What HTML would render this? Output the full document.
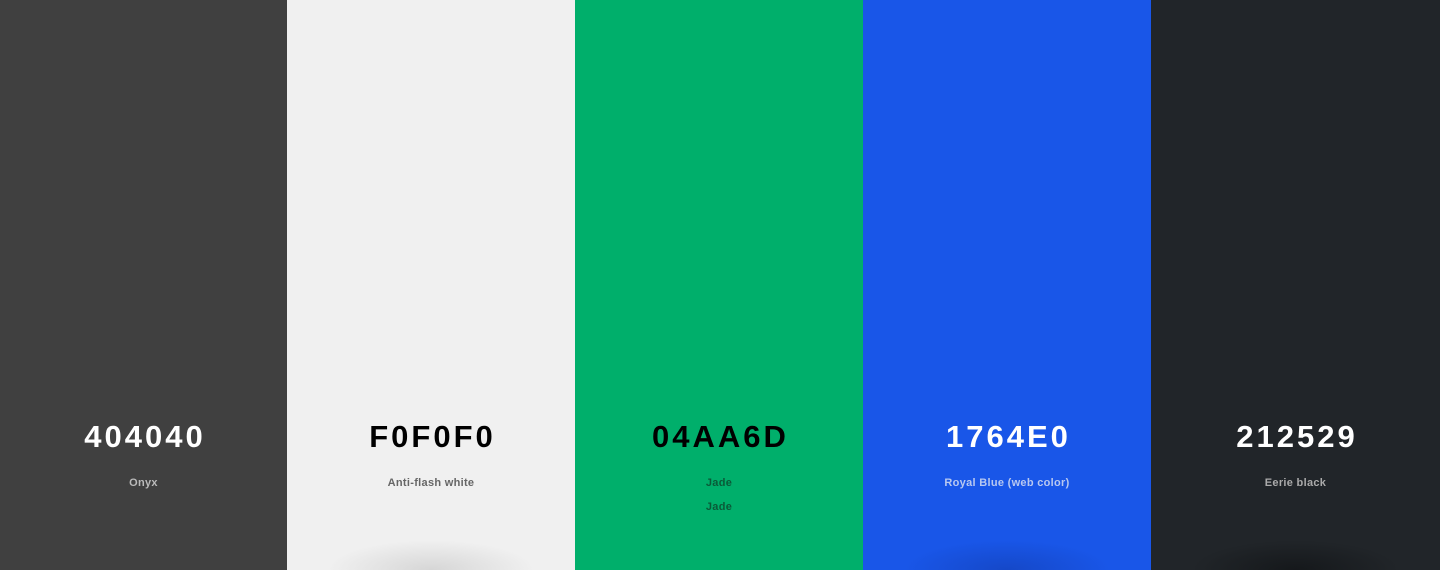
<!DOCTYPE html>
<html><head><style>
html,body{margin:0;width:1440px;height:570px;overflow:hidden}
body{display:flex;font-family:"Liberation Sans",sans-serif}
.p{width:288px;height:570px;position:relative;text-align:center;overflow:hidden}
.h{position:absolute;top:419px;left:0;right:0;font-size:31px;font-weight:bold;letter-spacing:3px;line-height:36px;padding-left:3px}
.n{position:absolute;top:476px;left:0;right:0;font-size:11px;font-weight:bold;line-height:14px;letter-spacing:0.3px}
.n2{top:500px}
.s{position:absolute;left:40px;right:40px;bottom:0;height:30px}
</style></head><body>
<div class="p" style="background:#404040;width:287px"><div class="h" style="color:#fff">404040</div><div class="n" style="color:#bbb">Onyx</div></div>
<div class="p" style="background:#f0f0f0"><div class="s" style="background:radial-gradient(ellipse at 50% 100%,#d6d6d6 0%,rgba(240,240,240,0) 70%)"></div><div class="h" style="color:#000">F0F0F0</div><div class="n" style="color:#666">Anti-flash white</div></div>
<div class="p" style="background:#00af6b"><div class="h" style="color:#000">04AA6D</div><div class="n" style="color:#0a5a38">Jade</div><div class="n n2" style="color:#0a5a38">Jade</div></div>
<div class="p" style="background:#1956e8"><div class="s" style="background:radial-gradient(ellipse at 50% 100%,#1548c8 0%,rgba(25,86,232,0) 70%)"></div><div class="h" style="color:#fff">1764E0</div><div class="n" style="color:#b8c8f0">Royal Blue (web color)</div></div>
<div class="p" style="background:#212529;width:289px"><div class="s" style="background:radial-gradient(ellipse at 50% 100%,#15181b 0%,rgba(33,37,41,0) 70%)"></div><div class="h" style="color:#fff">212529</div><div class="n" style="color:#aaa">Eerie black</div></div>
</body></html>
